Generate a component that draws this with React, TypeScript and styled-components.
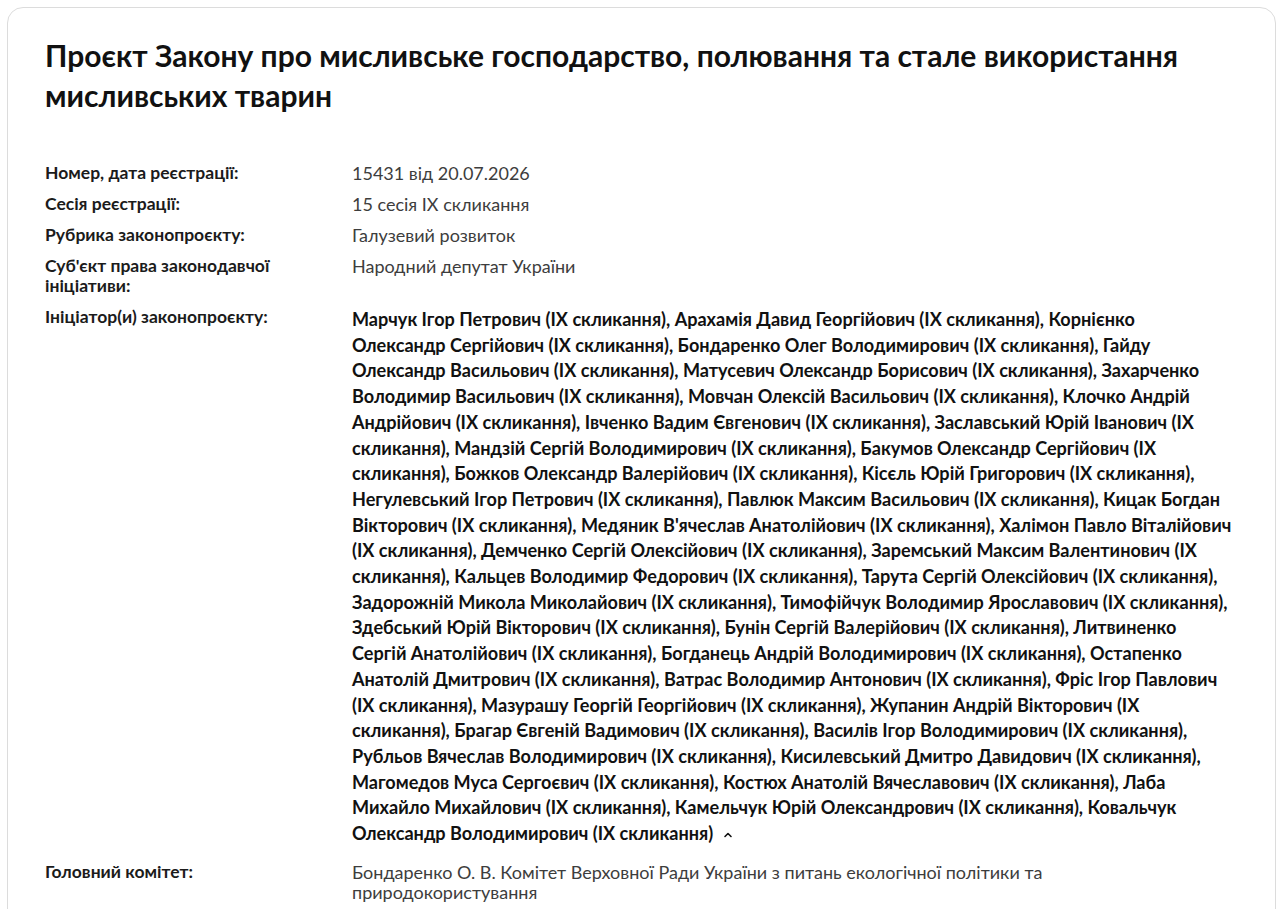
import React from 'react';
import styled, { createGlobalStyle } from 'styled-components';

const GlobalStyle = createGlobalStyle`
  body {
    margin: 0;
    background: #ffffff;
    font-family: Lato, 'Noto Sans', sans-serif;
    color: #1b1b1b;
  }
`;

const Page = styled.div`
  padding: 7px 5px 0 7px;
  height: 909px;
  overflow: hidden;
  box-sizing: border-box;
`;

const Card = styled.section`
  border: 1px solid #dcdcdc;
  border-radius: 16px;
  padding: 27px 38px 40px 37px;
  min-height: 1000px;
`;

const Title = styled.h1`
  margin: 0 0 48px;
  font-size: 30px;
  line-height: 40px;
  font-weight: 700;
  color: #111;
`;

const Details = styled.dl`
  display: grid;
  grid-template-columns: 300px 1fr;
  column-gap: 7px;
  row-gap: 11px;
  margin: 0;
`;

const Label = styled.dt`
  font-size: 17.5px;
  line-height: 20px;
  font-weight: 700;
  color: #1b1b1b;
`;

const Value = styled.dd`
  margin: 0;
  max-width: 860px;
  font-size: 18px;
  line-height: 20px;
  font-weight: 400;
  color: #3d3d3d;
`;

const NameList = styled.dd`
  margin: 0 0 4px;
  max-width: 879.6px;
  font-size: 18.1px;
  line-height: 25.7px;
  font-weight: 700;
  color: #111;
`;

const Toggle = styled.button`
  border: 0;
  background: none;
  padding: 0;
  margin-left: 10px;
  cursor: pointer;
  vertical-align: middle;
  color: #111;
`;

const ChevronUp = () => (
  <svg width="10" height="10" viewBox="0 0 10 10" fill="none">
    <path d="M2 6.5 L5 3.5 L8 6.5" stroke="currentColor" strokeWidth="1.6" strokeLinecap="round" strokeLinejoin="round" />
  </svg>
);

const initiators = [
  'Марчук Ігор Петрович',
  'Арахамія Давид Георгійович',
  'Корнієнко Олександр Сергійович',
  'Бондаренко Олег Володимирович',
  'Гайду Олександр Васильович',
  'Матусевич Олександр Борисович',
  'Захарченко Володимир Васильович',
  'Мовчан Олексій Васильович',
  'Клочко Андрій Андрійович',
  'Івченко Вадим Євгенович',
  'Заславський Юрій Іванович',
  'Мандзій Сергій Володимирович',
  'Бакумов Олександр Сергійович',
  'Божков Олександр Валерійович',
  'Кісєль Юрій Григорович',
  'Негулевський Ігор Петрович',
  'Павлюк Максим Васильович',
  'Кицак Богдан Вікторович',
  "Медяник В'ячеслав Анатолійович",
  'Халімон Павло Віталійович',
  'Демченко Сергій Олексійович',
  'Заремський Максим Валентинович',
  'Кальцев Володимир Федорович',
  'Тарута Сергій Олексійович',
  'Задорожній Микола Миколайович',
  'Тимофійчук Володимир Ярославович',
  'Здебський Юрій Вікторович',
  'Бунін Сергій Валерійович',
  'Литвиненко Сергій Анатолійович',
  'Богданець Андрій Володимирович',
  'Остапенко Анатолій Дмитрович',
  'Ватрас Володимир Антонович',
  'Фріс Ігор Павлович',
  'Мазурашу Георгій Георгійович',
  'Жупанин Андрій Вікторович',
  'Брагар Євгеній Вадимович',
  'Василів Ігор Володимирович',
  'Рубльов Вячеслав Володимирович',
  'Кисилевський Дмитро Давидович',
  'Магомедов Муса Сергоєвич',
  'Костюх Анатолій Вячеславович',
  'Лаба Михайло Михайлович',
  'Камельчук Юрій Олександрович',
  'Ковальчук Олександр Володимирович',
];

const App = () => {
  const list = initiators.map((n) => `${n} (IX скликання)`).join(', ');
  return (
    <>
      <GlobalStyle />
      <Page>
        <Card>
          <Title>
            Проєкт Закону про мисливське господарство, полювання та стале використання мисливських тварин
          </Title>
          <Details>
            <Label>Номер, дата реєстрації:</Label>
            <Value>15431 від 20.07.2026</Value>
            <Label>Сесія реєстрації:</Label>
            <Value>15 сесія IX скликання</Value>
            <Label>Рубрика законопроєкту:</Label>
            <Value>Галузевий розвиток</Value>
            <Label>Суб'єкт права законодавчої ініціативи:</Label>
            <Value>Народний депутат України</Value>
            <Label>Ініціатор(и) законопроєкту:</Label>
            <NameList>
              {list}
              <Toggle aria-label="Згорнути">
                <ChevronUp />
              </Toggle>
            </NameList>
            <Label>Головний комітет:</Label>
            <Value>
              Бондаренко О. В. Комітет Верховної Ради України з питань екологічної політики та природокористування
            </Value>
          </Details>
        </Card>
      </Page>
    </>
  );
};

export default App;
